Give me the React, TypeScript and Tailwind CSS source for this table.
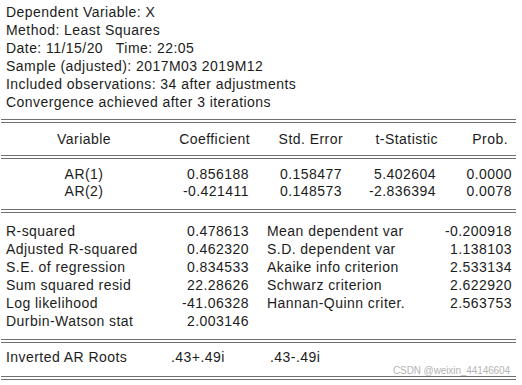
import React from 'react';

const header = [
  'Dependent Variable: X',
  'Method: Least Squares',
  'Date: 11/15/20   Time: 22:05',
  'Sample (adjusted): 2017M03 2019M12',
  'Included observations: 34 after adjustments',
  'Convergence achieved after 3 iterations',
];

const coefs = [
  { name: 'AR(1)', coef: '0.856188', se: '0.158477', t: '5.402604', p: '0.0000' },
  { name: 'AR(2)', coef: '-0.421411', se: '0.148573', t: '-2.836394', p: '0.0078' },
];

const stats: [string, string, string?, string?][] = [
  ['R-squared', '0.478613', 'Mean dependent var', '-0.200918'],
  ['Adjusted R-squared', '0.462320', 'S.D. dependent var', '1.138103'],
  ['S.E. of regression', '0.834533', 'Akaike info criterion', '2.533134'],
  ['Sum squared resid', '22.28626', 'Schwarz criterion', '2.622920'],
  ['Log likelihood', '-41.06328', 'Hannan-Quinn criter.', '2.563753'],
  ['Durbin-Watson stat', '2.003146'],
];

// double rule between table sections
const Rule = () => <div className="ml-[1px] h-[4px] w-[515px] border-y border-[#707070]" />;

const App: React.FC = () => {
  return (
    <div
      className="relative h-[385px] w-[522px] overflow-hidden bg-white text-[14px] tracking-[0.45px] text-[#1c1c1c]"
      style={{ fontFamily: '"Liberation Sans", Arial, sans-serif' }}
    >
      {/* Header info */}
      <div className="pl-[6px] pt-[3px] leading-[18px]">
        {header.map((line) => (
          <div key={line} className="whitespace-pre">
            {line}
          </div>
        ))}
      </div>

      <div className="mt-[8px]" />
      <Rule />

      {/* Column headings */}
      <div className="grid w-[512px] grid-cols-[168px_82px_93px_95px_74px] py-[7px] leading-[18px]">
        <div className="text-center">Variable</div>
        <div className="text-right">Coefficient</div>
        <div className="text-right">Std. Error</div>
        <div className="text-right">t-Statistic</div>
        <div className="pr-[4px] text-right">Prob.</div>
      </div>
      <Rule />

      {/* Coefficients */}
      <div className="pt-[7px] pb-[9px] leading-[17px]">
        {coefs.map((c) => (
          <div key={c.name} className="grid w-[512px] grid-cols-[168px_81px_93px_94px_76px]">
            <div className="text-center">{c.name}</div>
            <div className="text-right">{c.coef}</div>
            <div className="text-right">{c.se}</div>
            <div className="text-right">{c.t}</div>
            <div className="text-right">{c.p}</div>
          </div>
        ))}
      </div>
      <Rule />

      {/* Summary statistics */}
      <div className="py-[9px] leading-[18px]">
        {stats.map(([l1, v1, l2, v2]) => (
          <div key={l1} className="flex h-[18px]">
            <div className="flex w-[249px] justify-between pl-[6px]">
              <span>{l1}</span>
              <span>{v1}</span>
            </div>
            {l2 && (
              <div className="flex w-[263px] justify-between pl-[18px]">
                <span>{l2}</span>
                <span>{v2}</span>
              </div>
            )}
          </div>
        ))}
      </div>
      <Rule />

      {/* Inverted roots */}
      <div className="grid grid-cols-[171px_99px_1fr] pt-[5px] pb-[10px] leading-[18px]">
        <div className="pl-[6px]">Inverted AR Roots</div>
        <div>.43+.49i</div>
        <div>.43-.49i</div>
      </div>
      <Rule />

      {/* watermark */}
      <div className="absolute left-[393px] top-[365px] whitespace-nowrap text-[10px] leading-[12px] tracking-[-0.1px] text-[#b4b4b4]">
        CSDN @weixin_44146604
      </div>
    </div>
  );
};

export default App;
